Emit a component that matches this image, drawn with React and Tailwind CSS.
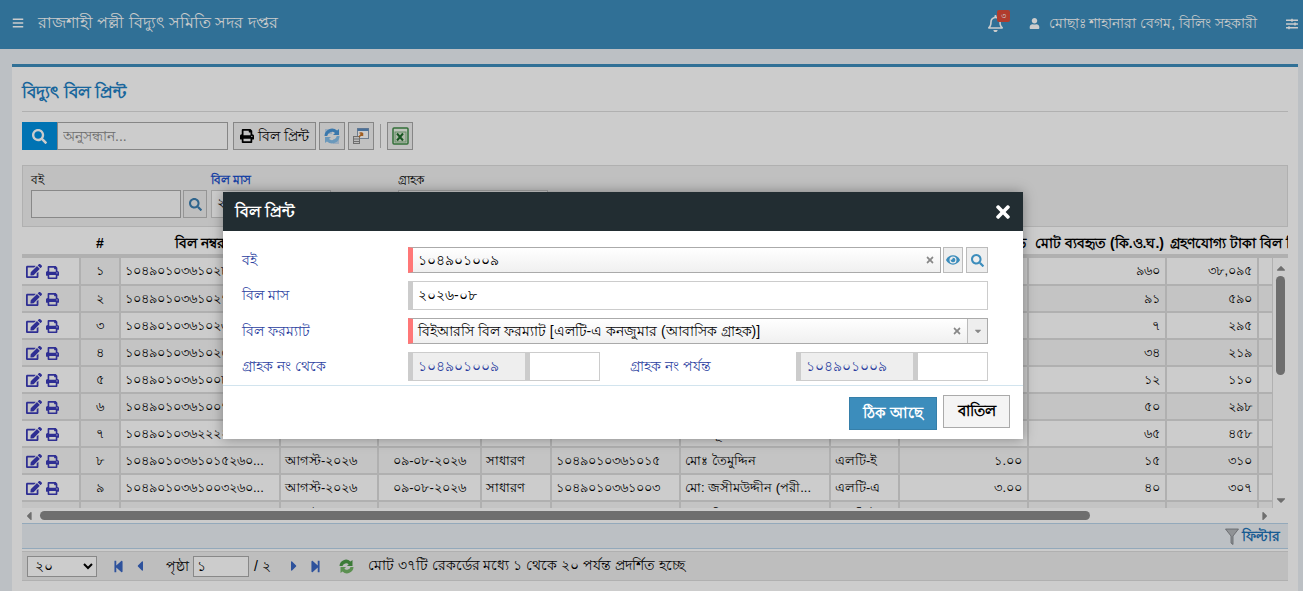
import React from "react";
import { FaBars, FaRegBell, FaUser, FaSlidersH, FaSearch, FaPrint, FaEdit, FaEye, FaTimes, FaStepBackward, FaStepForward, FaCaretLeft, FaCaretRight, FaCaretUp, FaCaretDown } from "react-icons/fa";

const font = "font-['Liberation_Sans','Noto_Sans',sans-serif]";
const widths = [58, 40, 160, 98, 103, 70, 129, 150, 69, 129, 138, 92, 30];
const rows = [
  ["১", "১০৪৯০১০৩৬১০২৮২৬০...", "মোঃ আব্দুল করিম", "এলটি-এ", "৯.০০", "৯৬০", "৩৮,০৯৫"],
  ["২", "১০৪৯০১০৩৬১০২৭২৬০...", "মোঃ রফিকুল ইসলাম", "এলটি-এ", "১.০০", "৯১", "৫৯০"],
  ["৩", "১০৪৯০১০৩৬১০২৬২৬০...", "মোছাঃ রহিমা বেগম", "এলটি-এ", "১.০০", "৭", "২৯৫"],
  ["৪", "১০৪৯০১০৩৬১০২৫২৬০...", "মোঃ জামাল উদ্দিন", "এলটি-এ", "১.০০", "৩৪", "২১৯"],
  ["৫", "১০৪৯০১০৩৬১০০৮২৬০...", "মোঃ সাইফুল ইসলাম", "এলটি-এ", "১.০০", "১২", "১১০"],
  ["৬", "১০৪৯০১০৩৬১০০৭২৬০...", "মোঃ হাসান আলী", "এলটি-এ", "১.০০", "৫০", "২৯৮"],
  ["৭", "১০৪৯০১০৩৬২২২২৬০...", "মোঃ নূর ইসলাম", "এলটি-এ", "১.০০", "৬৫", "৪৫৮"],
  ["৮", "১০৪৯০১০৩৬১০১৫২৬০...", "মোঃ তৈমুদ্দিন", "এলটি-ই", "১.০০", "১৫", "৩১০"],
  ["৯", "১০৪৯০১০৩৬১০০৩২৬০...", "মো: জসীমউদ্দীন (পরী...", "এলটি-এ", "৩.০০", "৪০", "৩০৭"],
  ["১০", "১০৪৯০১০৩৬১০০৪২৬০...", "মোঃ মিজানুর রহমান", "এলটি-ই", "১.০০", "২২", "১৯০"],
];
const custNo = ["১০২৮", "১০২৭", "১০২৬", "১০২৫", "১০০৮", "১০০৭", "২২২২", "১০১৫", "১০০৩", "১০০৪"];

function Colgroup() {
  return <colgroup>{widths.map((w, i) => <col key={i} width={w} />)}</colgroup>;
}

function Refresh() {
  return (
    <svg width="20" height="20" viewBox="0 0 20 20">
      <path d="M3 3h7v5H3z" fill="#c2d8ee" />
      <path d="M11 13h6v5h-6z" fill="#c2d8ee" />
      <path d="M2.5 10a7.5 7.5 0 0 1 12.6-5.4L17 3v6h-6l2-2a4.8 4.8 0 0 0-7.8 3z" fill="#4a97d8" />
      <path d="M17.5 10a7.5 7.5 0 0 1-12.6 5.4L3 17v-6h6l-2 2a4.8 4.8 0 0 0 7.8-3z" fill="#85bfea" />
    </svg>
  );
}
function ImportIcon() {
  return (
    <svg width="20" height="20" viewBox="0 0 20 20">
      <rect x="6.5" y="2.5" width="11" height="10" fill="#fdfdfd" stroke="#8a9db3" />
      <rect x="6.5" y="2.5" width="11" height="2.5" fill="#5c8cc0" />
      <rect x="2.5" y="10.5" width="6" height="7" fill="#ececec" stroke="#8a8a8a" />
      <path d="M2.5 13h6M2.5 15.5h6" stroke="#8a8a8a" />
      <path d="M8 11l3.5-4M11.5 7v3M11.5 7H8.5" stroke="#c9762b" strokeWidth="1.5" fill="none" />
    </svg>
  );
}
function ExcelIcon() {
  return (
    <svg width="20" height="20" viewBox="0 0 20 20">
      <rect x="3" y="2" width="15" height="16" rx="1" fill="#eef5ea" stroke="#3f8a45" strokeWidth="1.5" />
      <rect x="5" y="6" width="11" height="10" fill="#dbe8d5" stroke="#7fb07f" />
      <path d="M7 7.5l6 7M13 7.5l-6 7" stroke="#1e6b2a" strokeWidth="2" />
    </svg>
  );
}
function Funnel() {
  return (
    <svg width="14" height="17" viewBox="0 0 14 17">
      <path d="M0.5 1h13L8 8v8.5L6 15V8z" fill="#b5b8bc" stroke="#777b80" strokeWidth="0.8" />
    </svg>
  );
}
function Recycle() {
  return (
    <svg width="17" height="15" viewBox="0 0 17 15">
      <path d="M1.5 7a6.5 6.5 0 0 1 11-4.5L14.5 1v6h-5.5l1.7-1.8A3.8 3.8 0 0 0 4.5 7z" fill="#4c9a45" />
      <path d="M15.5 8a6.5 6.5 0 0 1-11 4.5L2.5 14V8H8l-1.7 1.8A3.8 3.8 0 0 0 12.5 8z" fill="#74b566" />
    </svg>
  );
}

function ToolBtn({ children, w = "w-[26px]" }) {
  return <button className={`${w} h-[28px] flex items-center justify-center gap-1 border border-[#a8a8a8] bg-[#f2f2f2] text-black text-[14px]`}>{children}</button>;
}

function Header() {
  return (
    <header className="h-[49px] bg-[#3c8dbc] text-white flex items-center shrink-0">
      <FaBars className="ml-[12px] text-[12px] mt-[-4px]" />
      <span className="ml-[14px] text-[15.5px] mt-[-3px]">রাজশাহী পল্লী বিদ্যুৎ সমিতি সদর দপ্তর</span>
      <div className="ml-auto flex items-center mt-[-2px]">
        <div className="relative">
          <FaRegBell className="text-[17px]" />
          <span className="absolute top-[-5px] left-[10px] w-[13px] h-[12px] rounded-[2px] bg-[#dd4b39] text-white text-[8px] leading-[12px] text-center">৩</span>
        </div>
        <FaUser className="ml-[25px] text-[11px]" />
        <span className="ml-[9px] text-[14px]">মোছাঃ শাহানারা বেগম, বিলিং সহকারী</span>
        <FaSlidersH className="ml-[29px] mr-[5px] text-[12px]" />
      </div>
    </header>
  );
}

function Toolbar() {
  return (
    <div className="flex items-center mt-[10px] h-[28px]">
      <div className="w-[35px] h-[28px] bg-[#0090e0] flex items-center justify-center text-white text-[15px]"><FaSearch /></div>
      <input readOnly placeholder="অনুসন্ধান..." className="w-[171px] h-[28px] border border-[#a8a8a8] px-[5px] text-[14px] bg-white placeholder:text-[#888] outline-none" />
      <div className="ml-[5px]"><ToolBtn w="w-[83px]"><FaPrint className="text-[14px]" /><span>বিল প্রিন্ট</span></ToolBtn></div>
      <div className="ml-[3px]"><ToolBtn><Refresh /></ToolBtn></div>
      <div className="ml-[3px]"><ToolBtn><ImportIcon /></ToolBtn></div>
      <div className="ml-[6px] w-px h-[24px] bg-[#bbb]" />
      <div className="ml-[6px]"><ToolBtn><ExcelIcon /></ToolBtn></div>
    </div>
  );
}

function FilterPanel() {
  return (
    <div className="mt-[15px] h-[62px] bg-[#f0f0f0] border border-[#ddd] pl-[8px] pt-[5px] flex text-[12px] text-black shrink-0">
      <div className="w-[180px]">
        <div className="h-[19px] leading-[19px]">বই</div>
        <div className="flex gap-[2px]">
          <input readOnly className="w-[150px] h-[28px] border border-[#aaa] bg-[#fafafa] outline-none" />
          <button className="w-[24px] h-[28px] border border-[#bbb] bg-[#eee] flex items-center justify-center text-[#3c7fb1] text-[13px]"><FaSearch /></button>
        </div>
      </div>
      <div className="w-[187px]">
        <div className="h-[19px] leading-[19px] text-[#1a4fcc] font-bold">বিল মাস</div>
        <input readOnly value="২০২৬-০৮" className="w-[120px] h-[28px] border border-[#ccc] bg-white px-[5px] outline-none" />
      </div>
      <div>
        <div className="h-[19px] leading-[19px]">গ্রাহক</div>
        <input readOnly className="w-[150px] h-[28px] border border-[#ccc] bg-white outline-none" />
      </div>
    </div>
  );
}

function DataTable() {
  const th = "h-[26px] px-[2px] font-bold text-[14px] text-black overflow-hidden whitespace-nowrap";
  const td = "h-[27px] px-[8px] border-r-2 border-b-2 border-[#dddddd] text-[13px] text-black whitespace-nowrap overflow-hidden";
  return (
    <div className="mt-[3px] shrink-0">
      <div className="overflow-hidden border-b-[4px] border-[#dddddd] h-[28px]">
        <table className="table-fixed border-collapse w-[1266px]">
          <Colgroup />
          <thead>
            <tr>
              <th className={th}></th>
              <th className={`${th} text-center`}>#</th>
              <th className={`${th} text-center`}>বিল নম্বর</th>
              <th className={`${th} text-center`}>বিল মাস</th>
              <th className={`${th} text-center`}>বিলের তারিখ</th>
              <th className={`${th} text-center`}>বিলের ধরন</th>
              <th className={`${th} text-center`}>গ্রাহক নং</th>
              <th className={`${th} text-center`}>নাম</th>
              <th className={`${th} text-center`}>ট্যারিফ</th>
              <th className={`${th} text-right`}>অনুমোদিত লোড</th>
              <th className={`${th} text-right`}>মোট ব্যবহৃত (কি.ও.ঘ.)</th>
              <th className={`${th} text-right`}>গ্রহণযোগ্য টাকা</th>
              <th className={`${th} text-left`}>বিল ফি</th>
            </tr>
          </thead>
        </table>
      </div>
      <div className="flex h-[250px]">
        <div className="w-[1251px] overflow-hidden">
          <table className="table-fixed border-collapse w-[1251px]">
            <colgroup>{widths.slice(0, 12).map((w, i) => <col key={i} width={w} />)}<col width={15} /></colgroup>
            <tbody>
              {rows.map((r, i) => (
                <tr key={i} className={i % 2 ? "bg-[#f5f5f5]" : "bg-white"}>
                  <td className={`${td} !px-[3px]`}>
                    <div className="flex items-center gap-[4px] text-[#3a3ab8] pl-[1px]"><FaEdit className="text-[16px]" /><FaPrint className="text-[13px] mt-[2px]" /></div>
                  </td>
                  <td className={`${td} text-center bg-[#f5f5f5]`}>{r[0]}</td>
                  <td className={`${td} !px-[4px] text-[#1a1ab0]`}>{r[1]}</td>
                  <td className={`${td} !px-[4px] text-[13.5px]`}>আগস্ট-২০২৬</td>
                  <td className={`${td} text-center`}>০৯-০৮-২০২৬</td>
                  <td className={`${td} !px-[4px] text-[13.5px]`}>সাধারণ</td>
                  <td className={`${td} !px-[4px]`}>{"১০৪৯০১০৩৬" + custNo[i]}</td>
                  <td className={`${td} !px-[4px] text-[13.5px]`}>{r[2]}</td>
                  <td className={`${td} !px-[4px] text-[13.5px]`}>{r[3]}</td>
                  <td className={`${td} text-right !px-[5px]`}>{r[4]}</td>
                  <td className={`${td} text-right !px-[5px]`}>{r[5]}</td>
                  <td className={`${td} text-right !px-[5px]`}>{r[6]}</td>
                  <td className={td}></td>
                </tr>
              ))}
            </tbody>
          </table>
        </div>
        <div className="w-[15px] flex flex-col items-center text-[#8a8a8a] text-[14px] pt-[2px]">
          <FaCaretUp className="mt-[1px]" />
          <div className="w-[9px] h-[99px] mt-[1px] bg-[#8a8a8a] rounded-full" />
          <FaCaretDown className="mt-auto mb-[1px]" />
        </div>
      </div>
      <div className="h-[15px] flex items-center text-[#8a8a8a] text-[14px]">
        <FaCaretLeft />
        <div className="ml-[4px] w-[1050px] h-[9px] bg-[#8a8a8a] rounded-full" />
        <FaCaretRight className="ml-auto mr-[16px]" />
      </div>
    </div>
  );
}

function FilterBar() {
  return (
    <div className="h-[26px] bg-[#ecf0f5] border-y border-[#b8d4ea] flex items-center justify-end pr-[8px] text-[14px] text-[#1e74b8] font-bold gap-[3px] shrink-0">
      <Funnel />
      <span>ফিল্টার</span>
    </div>
  );
}

function Pager() {
  return (
    <div className="mt-[2px] h-[30px] bg-[#eeeeee] border-y border-[#ddd] flex items-center pl-[5px] text-[14px] text-black shrink-0">
      <select defaultValue="২০" className="w-[70px] h-[21px] border border-[#aaa] bg-white pl-[3px] text-[14px] outline-none">
        <option>২০</option>
        <option>৫০</option>
      </select>
      <FaStepBackward className="text-[#3a67c4] text-[13px] ml-[15px]" />
      <FaCaretLeft className="text-[#3a67c4] text-[16px] ml-[7px]" />
      <span className="ml-[18px]">পৃষ্ঠা</span>
      <input readOnly value="১" className="ml-[4px] w-[56px] h-[21px] border border-[#aaa] bg-white px-[3px] outline-none" />
      <span className="ml-[5px]">/ ২</span>
      <FaCaretRight className="text-[#3a67c4] text-[16px] ml-[15px]" />
      <FaStepForward className="text-[#3a67c4] text-[13px] ml-[7px]" />
      <div className="ml-[16px]"><Recycle /></div>
      <span className="ml-[13px] mt-[-2px]">মোট ৩৭টি রেকর্ডের মধ্যে ১ থেকে ২০ পর্যন্ত প্রদর্শিত হচ্ছে</span>
    </div>
  );
}

function ReadPair() {
  return (
    <div className="w-[192px] h-[29px] flex border border-[#cccccc] border-l-[5px] bg-white">
      <div className="w-[112px] bg-[#eeeeee] text-[#2b3f9f] text-[14px] pl-[5px] leading-[26px]">১০৪৯০১০০৯</div>
      <div className="w-[5px] bg-[#cccccc]" />
    </div>
  );
}

function Modal() {
  const label = "text-[14px] text-[#2b3f9f]";
  const leftRed = "border-l-[5px] border-l-[#ff7777]";
  return (
    <div className="absolute left-[223px] top-[192px] w-[800px] h-[247px] bg-white shadow-[0_0_12px_rgba(0,0,0,0.35)] flex flex-col">
      <div className="h-[39px] bg-[#222d32] text-white flex items-center justify-between pl-[12px] pr-[10px] shrink-0">
        <span className="font-bold text-[15.5px]">বিল প্রিন্ট</span>
        <FaTimes className="text-[20px]" />
      </div>
      <div className="pl-[19px] pr-[35px] pt-[16px] flex flex-col">
        <div className="flex h-[26px] items-center">
          <label className={`${label} w-[166px]`}>বই</label>
          <div className={`w-[533px] h-[26px] ${leftRed} border border-[#aaaaaa] bg-gradient-to-b from-white to-[#f0f0f0] flex items-center px-[5px] text-[14px] text-black`}>
            <span>১০৪৯০১০০৯</span>
            <FaTimes className="ml-auto text-[10px] text-[#888]" />
          </div>
          <button className="ml-[2px] w-[20px] h-[26px] border border-[#bbb] bg-[#eee] flex items-center justify-center text-[#3c8dbc] text-[14px]"><FaEye /></button>
          <button className="ml-[3px] w-[22px] h-[26px] border border-[#bbb] bg-[#eee] flex items-center justify-center text-[#3c8dbc] text-[13px]"><FaSearch /></button>
        </div>
        <div className="flex h-[29px] items-center mt-[8px]">
          <label className={`${label} w-[166px]`}>বিল মাস</label>
          <input readOnly value="২০২৬-০৮" className="w-[580px] h-[29px] border border-[#cccccc] border-l-[5px] px-[5px] text-[14px] text-black outline-none" />
        </div>
        <div className="flex h-[26px] items-center mt-[8px]">
          <label className={`${label} w-[166px]`}>বিল ফরম্যাট</label>
          <div className={`w-[580px] h-[26px] ${leftRed} border border-[#aaaaaa] bg-gradient-to-b from-white to-[#f0f0f0] flex items-center pl-[5px] text-[14px] text-black`}>
            <span>বিইআরসি বিল ফরম্যাট [এলটি-এ কনজুমার (আবাসিক গ্রাহক)]</span>
            <FaTimes className="ml-auto mr-[5px] text-[10px] text-[#888]" />
            <div className="w-[20px] h-full border-l border-[#bbb] bg-[#eee] flex items-center justify-center text-[#888] text-[10px]"><FaCaretDown /></div>
          </div>
        </div>
        <div className="flex h-[29px] items-center mt-[8px]">
          <label className={`${label} w-[166px]`}>গ্রাহক নং থেকে</label>
          <ReadPair />
          <label className={`${label} ml-[30px] w-[166px]`}>গ্রাহক নং পর্যন্ত</label>
          <ReadPair />
        </div>
      </div>
      <div className="mt-[4px] border-t border-[#d2e4ee] flex justify-end pr-[13px] gap-[6px] pt-[9px]">
        <button className="mt-[2px] w-[88px] h-[33px] bg-[#3c8dbc] border border-[#367fa9] text-white font-bold text-[15px]">ঠিক আছে</button>
        <button className="w-[67px] h-[33px] bg-[#f4f4f4] border border-[#aaa] text-black font-bold text-[15px]">বাতিল</button>
      </div>
    </div>
  );
}

export default function App() {
  return (
    <div className={`${font} relative w-[1303px] h-[591px] overflow-hidden bg-[#ecf0f5] flex flex-col`}>
      <Header />
      <main className="ml-[12px] mr-[5px] mt-[15px] flex-1 bg-white border-t-[3px] border-[#3c8dbc] px-[10px] flex flex-col min-h-0">
        <h1 className="h-[45px] border-b border-[#dddddd] text-[#1e80c4] text-[17px] font-bold leading-[52px] shrink-0">বিদ্যুৎ বিল প্রিন্ট</h1>
        <Toolbar />
        <FilterPanel />
        <DataTable />
        <FilterBar />
        <Pager />
      </main>
      <div className="absolute inset-0 bg-black/20" />
      <Modal />
    </div>
  );
}
